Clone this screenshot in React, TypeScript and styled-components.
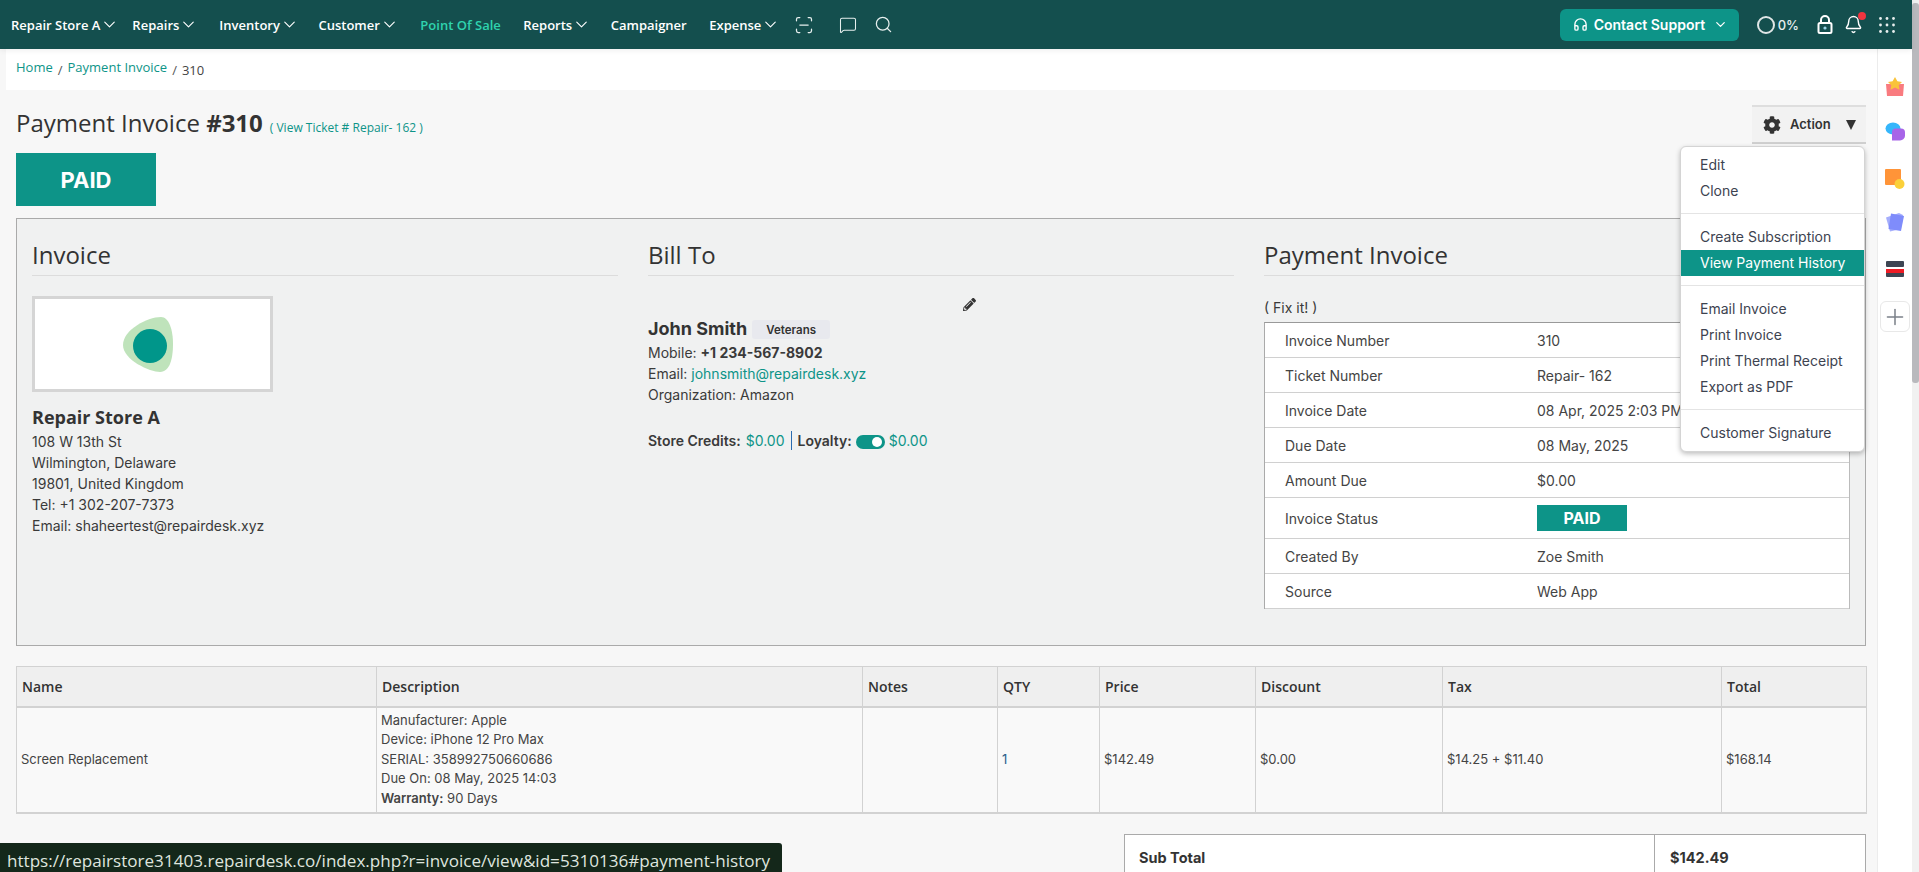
import React from "react";
import styled, { createGlobalStyle } from "styled-components";
import {
  ChevronDown,
  ScanLine,
  MessageSquare,
  Search,
  Bell,
  Headphones,
  Plus,
} from "lucide-react";
import { FaCog, FaPencilAlt } from "react-icons/fa";

const teal = "#0d9488";
const text = "#3a3a3a";
const heading = `"Open Sans", "Noto Sans", sans-serif`;
const body = `Inter, "Liberation Sans", sans-serif`;

const GlobalStyle = createGlobalStyle`
  html, body {
    margin: 0;
    padding: 0;
    height: 100%;
    overflow: hidden;
    background: #f7f7f7;
    font-family: ${body};
    color: ${text};
  }
  *, *::before, *::after { box-sizing: border-box; }
`;

const Shell = styled.div`
  position: relative;
  display: grid;
  grid-template-columns: 1fr 7px;
  width: 1919px;
  height: 872px;
  overflow: hidden;
`;

const Scrollbar = styled.div`
  background: #f1f1f1;
  padding-top: 3px;
  &::before {
    content: "";
    display: block;
    height: 380px;
    background: #b9b9bd;
    border-radius: 3px;
  }
`;

const Window = styled.div`
  display: flex;
  flex-direction: column;
  min-width: 0;
  height: 872px;
`;

const TopBar = styled.header`
  flex: 0 0 49px;
  display: flex;
  align-items: center;
  padding-left: 1.5px;
  background: #144f4e;
  color: #fff;
  position: relative;
  z-index: 2;
  box-shadow: 0 1px 6px rgba(0, 0, 0, 0.08);
`;

const NavItem = styled.a<{ $active?: boolean; $right?: number }>`
  display: flex;
  align-items: center;
  padding: 0 ${(p) => p.$right ?? 9.5}px 0 9.5px;
  font-family: ${heading};
  font-size: 13px;
  font-weight: 600;
  white-space: nowrap;
  color: ${(p) => (p.$active ? "#2fd3ae" : "#fff")};
`;

const NavIcon = styled.span<{ $gap: number }>`
  display: flex;
  margin-left: ${(p) => p.$gap}px;
  color: #e6efee;
`;

const RightTools = styled.div`
  margin-left: auto;
  display: flex;
  align-items: center;
  padding-right: 17px;
`;

const SupportButton = styled.a`
  display: flex;
  align-items: center;
  width: 179px;
  height: 32px;
  margin-right: 18px;
  padding-left: 13px;
  gap: 6px;
  background: ${teal};
  border-radius: 6px;
  font-size: 14px;
  font-weight: 600;
  color: #fff;
`;

const SupportChevron = styled(ChevronDown)`
  margin-left: 2px;
`;

const Progress = styled.span`
  display: flex;
  align-items: center;
  gap: 3px;
  margin-right: 18px;
  font-size: 13px;
  font-weight: 500;
  color: #e8eeee;
  &::before {
    content: "";
    width: 18px;
    height: 18px;
    border: 2px solid #dfe6e6;
    border-radius: 50%;
  }
`;

const BellWrap = styled.span`
  position: relative;
  display: flex;
  margin: 0 16px 0 11px;
`;

const BellDot = styled.span`
  position: absolute;
  top: -3px;
  right: -3px;
  width: 8px;
  height: 8px;
  border-radius: 50%;
  background: #f0353f;
`;

const Content = styled.div`
  flex: 1;
  display: flex;
  min-height: 0;
`;

const Main = styled.main`
  flex: 1;
  min-width: 0;
  overflow: hidden;
  background: #f7f7f7;
`;

const Crumbs = styled.nav`
  height: 41px;
  margin-left: 6px;
  padding: 10px 0 0 10px;
  display: flex;
  align-items: flex-start;
  gap: 5px;
  background: #fff;
  font-family: ${heading};
  font-size: 13px;
  line-height: 16px;
`;

const CrumbLink = styled.a`
  color: ${teal};
`;

const CrumbSep = styled.span`
  margin-top: 3px;
  color: #555;
`;

const CrumbCurrent = styled.span`
  margin-top: 3px;
  color: #444;
`;

const Page = styled.div`
  padding: 15px 11px 0 16px;
`;

const TitleRow = styled.div`
  display: flex;
  justify-content: space-between;
  height: 39px;
`;

const Title = styled.h1`
  margin: 0;
  padding-top: 1px;
  font-family: ${heading};
  font-size: 24px;
  font-weight: 400;
  line-height: 33px;
  color: #333;
  b {
    font-weight: 700;
  }
`;

const TicketLink = styled.a`
  margin-left: 7px;
  font-size: 12px;
  color: ${teal};
`;

const ActionWrap = styled.div`
  position: relative;
  width: 114px;
`;

const ActionButton = styled.button`
  width: 100%;
  height: 39px;
  display: flex;
  align-items: center;
  padding: 0 10px 0 11px;
  background: #f2f2f2;
  border: 0;
  border-top: 2px solid #dedede;
  border-bottom: 2px solid #cfcfcf;
  font-family: ${body};
  font-size: 13px;
  font-weight: 600;
  color: #333;
  span {
    margin-left: 9px;
    margin-top: -1px;
  }
  i {
    margin-left: auto;
    width: 0;
    height: 0;
    border-left: 5px solid transparent;
    border-right: 5px solid transparent;
    border-top: 10px solid #333;
  }
`;

const Menu = styled.div`
  position: absolute;
  z-index: 3;
  top: 41px;
  right: 1px;
  width: 185px;
  padding: 5px 0;
  background: #fff;
  border: 1px solid #d4d4d4;
  border-radius: 6px;
  box-shadow: 0 2px 5px rgba(0, 0, 0, 0.25);
`;

const MenuItem = styled.a<{ $active?: boolean }>`
  display: block;
  height: 26px;
  padding-left: 19px;
  font-size: 14px;
  line-height: 26px;
  background: ${(p) => (p.$active ? teal : "transparent")};
  color: ${(p) => (p.$active ? "#fff" : "#3d4350")};
`;

const MenuDivider = styled.hr`
  height: 1px;
  margin: 9px 0 10px;
  border: 0;
  background: #e4e4e4;
`;

const PaidBanner = styled.div`
  width: 140px;
  height: 53px;
  margin-top: 9px;
  display: flex;
  align-items: center;
  justify-content: center;
  background: ${teal};
  color: #fff;
  font-size: 22px;
  font-weight: 700;
`;

const InfoPanel = styled.section`
  height: 428px;
  margin-top: 12px;
  padding: 14px 15px;
  display: grid;
  grid-template-columns: repeat(3, 586px);
  column-gap: 30px;
  background: #f0f1f1;
  border: 1px solid #aaa;
`;

const Column = styled.div`
  min-width: 0;
`;

const ColumnTitle = styled.h2`
  margin: 0;
  height: 43px;
  font-family: ${heading};
  font-size: 24px;
  font-weight: 400;
  line-height: 44px;
  color: #333;
  border-bottom: 1px solid #dcdcdc;
`;

const LogoBox = styled.div`
  width: 241px;
  height: 96px;
  margin-top: 20px;
  display: flex;
  align-items: center;
  justify-content: center;
  background: #fff;
  border: 3px solid #d5d5d5;
  svg {
    margin-left: -9px;
  }
`;

const StoreName = styled.div`
  margin-top: 14px;
  font-family: ${heading};
  font-size: 18px;
  font-weight: 700;
  line-height: 23px;
  color: #333;
`;

const Lines = styled.div`
  margin-top: 2px;
  font-size: 14px;
  line-height: 21px;
  color: ${text};
`;

const EditRow = styled.div`
  display: flex;
  justify-content: flex-end;
  height: 14px;
  margin-top: 22px;
  padding-right: 258px;
  color: #333;
`;

const CustomerName = styled.div`
  display: flex;
  align-items: center;
  margin-top: 4px;
  height: 24px;
  font-size: 18px;
  font-weight: 700;
  color: #333;
`;

const Pill = styled.span`
  width: 78px;
  height: 19px;
  margin: 3px 0 0 5px;
  display: flex;
  align-items: center;
  justify-content: center;
  background: #e8e9ee;
  border-radius: 3px;
  font-size: 11.5px;
  font-weight: 600;
`;

const CreditsRow = styled.div`
  display: flex;
  align-items: center;
  margin-top: 25px;
  font-size: 14px;
  line-height: 21px;
  b {
    font-weight: 600;
  }
`;

const TealText = styled.span`
  color: ${teal};
`;

const CreditAmount = styled(TealText)`
  margin-left: 5px;
`;

const CreditSep = styled.span`
  width: 1px;
  height: 19px;
  margin: 0 6px;
  background: #2b6cb0;
`;

const Toggle = styled.span`
  position: relative;
  width: 29px;
  height: 14px;
  margin: 2px 4px 0 4px;
  border-radius: 8px;
  background: ${teal};
  &::after {
    content: "";
    position: absolute;
    top: 2px;
    right: 3px;
    width: 10px;
    height: 10px;
    border-radius: 50%;
    background: #fff;
  }
`;

const FixIt = styled.div`
  margin-top: 22px;
  height: 24px;
  font-size: 14px;
  line-height: 20px;
`;

const DetailTable = styled.div`
  background: #fff;
  border-top: 1px solid #999;
  border-left: 1px solid #aaa;
  border-right: 1px solid #bbb;
`;

const DetailRow = styled.div<{ $tall?: boolean }>`
  display: grid;
  grid-template-columns: 252px 1fr;
  align-items: center;
  height: ${(p) => (p.$tall ? 41 : 35)}px;
  padding-left: 20px;
  font-size: 14px;
  color: #444;
  border-bottom: 1px solid #d0d0d0;
`;

const StatusBadge = styled.span`
  width: 90px;
  height: 26px;
  display: flex;
  align-items: center;
  justify-content: center;
  background: ${teal};
  color: #fff;
  font-size: 16px;
  font-weight: 700;
`;

const ItemsTable = styled.table`
  width: 100%;
  margin-top: 20px;
  table-layout: fixed;
  border-collapse: collapse;
`;

const Col = styled.col<{ $w: number }>`
  width: ${(p) => p.$w}px;
`;

const Th = styled.th`
  height: 40px;
  padding: 0 5px;
  text-align: left;
  background: #efefef;
  border: 1px solid #d2d2d2;
  border-bottom-width: 2px;
  font-family: ${heading};
  font-size: 14px;
  font-weight: 600;
  color: #333;
`;

const Td = styled.td<{ $link?: boolean }>`
  padding: 0 4px;
  height: 106px;
  background: #f9f9f9;
  border: 1px solid #d2d2d2;
  border-top: 0;
  border-bottom-width: 2px;
  font-size: 13px;
  line-height: 19.5px;
  color: ${(p) => (p.$link ? "#2b5f8a" : "#444")};
  b {
    font-weight: 600;
  }
`;

const TotalsTable = styled.div`
  display: grid;
  grid-template-columns: 529px 1fr;
  width: 742px;
  margin: 20px 0 0 auto;
  background: #fff;
  border: 1px solid #aaa;
  border-bottom: 0;
`;

const TotalCell = styled.div<{ $value?: boolean }>`
  height: 48px;
  padding: 15px 0 0 ${(p) => (p.$value ? 15 : 14)}px;
  font-size: 14.5px;
  font-weight: 700;
  line-height: 16px;
  color: #333;
  border-left: ${(p) => (p.$value ? "1px solid #aaa" : "0")};
`;

const Dock = styled.aside`
  flex: 0 0 35px;
  padding-top: 28px;
  display: flex;
  flex-direction: column;
  align-items: center;
  background: #fff;
  border-left: 1px solid #ececec;
`;

const DockIcon = styled.svg<{ $mt: number }>`
  display: block;
  margin-top: ${(p) => p.$mt}px;
`;

const DockAdd = styled.div`
  width: 30px;
  height: 31px;
  margin-top: 24px;
  display: flex;
  align-items: center;
  justify-content: center;
  background: #fff;
  border: 1px solid #e8e8e8;
  border-radius: 6px;
  color: #7b8089;
`;

const StatusBar = styled.div`
  position: absolute;
  left: 0;
  bottom: 0;
  width: 782px;
  height: 29px;
  padding: 6px 0 0 7px;
  background: #14271a;
  border-top-right-radius: 3px;
  font-family: ${heading};
  font-size: 17.08px;
  line-height: 23px;
  white-space: nowrap;
  color: #dfe5df;
`;

const navItems = [
  { label: "Repair Store A", chevron: true, right: 3.5 },
  { label: "Repairs", chevron: true, right: 11.5 },
  { label: "Inventory", chevron: true, right: 10 },
  { label: "Customer", chevron: true, right: 12 },
  { label: "Point Of Sale", chevron: false, active: true, right: 13 },
  { label: "Reports", chevron: true, right: 10 },
  { label: "Campaigner", chevron: false, right: 13 },
  { label: "Expense", chevron: true, right: 10 },
];

const details = [
  ["Invoice Number", "310"],
  ["Ticket Number", "Repair- 162"],
  ["Invoice Date", "08 Apr, 2025 2:03 PM"],
  ["Due Date", "08 May, 2025"],
  ["Amount Due", "$0.00"],
];

const columns = [360, 486, 135, 102, 156, 187, 279, 145];
const headers = ["Name", "Description", "Notes", "QTY", "Price", "Discount", "Tax", "Total"];

const PadLock = () => (
  <svg width="16" height="19" viewBox="0 0 16 19" fill="none">
    <path d="M4 8V5a4 4 0 0 1 8 0v3" stroke="#fff" strokeWidth="2" />
    <rect x="1.5" y="8" width="13" height="10" rx="1.5" stroke="#fff" strokeWidth="2" fill="#144f4e" />
    <circle cx="8" cy="13" r="1.6" fill="#9ad5e8" />
  </svg>
);

const Grid = () => (
  <svg width="16" height="16" viewBox="0 0 16 16" fill="#e8eeee">
    {[1.5, 8, 14.5].map((y) =>
      [1.5, 8, 14.5].map((x) => <circle key={`${x}-${y}`} cx={x} cy={y} r="1.4" />)
    )}
  </svg>
);

export default function App() {
  return (
    <Shell>
      <GlobalStyle />
      <Window>
        <TopBar>
          {navItems.map((item) => (
            <NavItem key={item.label} $active={item.active} $right={item.right}>
              {item.label}
              {item.chevron && <ChevronDown size={19} strokeWidth={1.4} />}
            </NavItem>
          ))}
          <NavIcon $gap={4}>
            <ScanLine size={20} strokeWidth={1.5} />
          </NavIcon>
          <NavIcon $gap={25}>
            <MessageSquare size={18} strokeWidth={1.4} />
          </NavIcon>
          <NavIcon $gap={17}>
            <Search size={19} strokeWidth={1.6} />
          </NavIcon>
          <RightTools>
            <SupportButton>
              <Headphones size={15} strokeWidth={2.2} />
              Contact Support
              <SupportChevron size={15} strokeWidth={2} />
            </SupportButton>
            <Progress>0%</Progress>
            <PadLock />
            <BellWrap>
              <Bell size={19} strokeWidth={1.8} />
              <BellDot />
            </BellWrap>
            <Grid />
          </RightTools>
        </TopBar>
        <Content>
          <Main>
            <Crumbs>
              <CrumbLink>Home</CrumbLink>
              <CrumbSep>/</CrumbSep>
              <CrumbLink>Payment Invoice</CrumbLink>
              <CrumbSep>/</CrumbSep>
              <CrumbCurrent>310</CrumbCurrent>
            </Crumbs>
            <Page>
              <TitleRow>
                <Title>
                  Payment Invoice <b>#310</b>
                  <TicketLink>( View Ticket # Repair- 162 )</TicketLink>
                </Title>
                <ActionWrap>
                  <ActionButton>
                    <FaCog size={18} />
                    <span>Action</span>
                    <i />
                  </ActionButton>
                  <Menu>
                    <MenuItem>Edit</MenuItem>
                    <MenuItem>Clone</MenuItem>
                    <MenuDivider />
                    <MenuItem>Create Subscription</MenuItem>
                    <MenuItem $active>View Payment History</MenuItem>
                    <MenuDivider />
                    <MenuItem>Email Invoice</MenuItem>
                    <MenuItem>Print Invoice</MenuItem>
                    <MenuItem>Print Thermal Receipt</MenuItem>
                    <MenuItem>Export as PDF</MenuItem>
                    <MenuDivider />
                    <MenuItem>Customer Signature</MenuItem>
                  </Menu>
                </ActionWrap>
              </TitleRow>
              <PaidBanner>PAID</PaidBanner>
              <InfoPanel>
                <Column>
                  <ColumnTitle>Invoice</ColumnTitle>
                  <LogoBox>
                    <svg width="52" height="57" viewBox="0 0 52 57">
                      <path
                        d="M39 1C47 1 51 14 51 28C51 42 48 56 38 56C28 56 1 44 1 29C1 14 25 1 39 1Z"
                        fill="#bfe3bb"
                      />
                      <ellipse cx="28" cy="30" rx="17" ry="17" fill="#00968a" />
                    </svg>
                  </LogoBox>
                  <StoreName>Repair Store A</StoreName>
                  <Lines>
                    108 W 13th St
                    <br />
                    Wilmington, Delaware
                    <br />
                    19801, United Kingdom
                    <br />
                    Tel: +1 302-207-7373
                    <br />
                    Email: shaheertest@repairdesk.xyz
                  </Lines>
                </Column>
                <Column>
                  <ColumnTitle>Bill To</ColumnTitle>
                  <EditRow>
                    <FaPencilAlt size={13} />
                  </EditRow>
                  <CustomerName>
                    John Smith
                    <Pill>Veterans</Pill>
                  </CustomerName>
                  <Lines>
                    Mobile: <strong>+1 234-567-8902</strong>
                    <br />
                    Email: <TealText>johnsmith@repairdesk.xyz</TealText>
                    <br />
                    Organization: Amazon
                  </Lines>
                  <CreditsRow>
                    <b>Store Credits:</b>
                    <CreditAmount>$0.00</CreditAmount>
                    <CreditSep />
                    <b>Loyalty:</b>
                    <Toggle />
                    <TealText>$0.00</TealText>
                  </CreditsRow>
                </Column>
                <Column>
                  <ColumnTitle>Payment Invoice</ColumnTitle>
                  <FixIt>( Fix it! )</FixIt>
                  <DetailTable>
                    {details.map(([label, value]) => (
                      <DetailRow key={label}>
                        <span>{label}</span>
                        <span>{value}</span>
                      </DetailRow>
                    ))}
                    <DetailRow $tall>
                      <span>Invoice Status</span>
                      <StatusBadge>PAID</StatusBadge>
                    </DetailRow>
                    <DetailRow>
                      <span>Created By</span>
                      <span>Zoe Smith</span>
                    </DetailRow>
                    <DetailRow>
                      <span>Source</span>
                      <span>Web App</span>
                    </DetailRow>
                  </DetailTable>
                </Column>
              </InfoPanel>
              <ItemsTable>
                <colgroup>
                  {columns.map((w, i) => (
                    <Col key={i} $w={w} />
                  ))}
                </colgroup>
                <thead>
                  <tr>
                    {headers.map((h) => (
                      <Th key={h}>{h}</Th>
                    ))}
                  </tr>
                </thead>
                <tbody>
                  <tr>
                    <Td>Screen Replacement</Td>
                    <Td>
                      Manufacturer: Apple
                      <br />
                      Device: iPhone 12 Pro Max
                      <br />
                      SERIAL: 358992750660686
                      <br />
                      Due On: 08 May, 2025 14:03
                      <br />
                      <b>Warranty:</b> 90 Days
                    </Td>
                    <Td />
                    <Td $link>1</Td>
                    <Td>$142.49</Td>
                    <Td>$0.00</Td>
                    <Td>$14.25 + $11.40</Td>
                    <Td>$168.14</Td>
                  </tr>
                </tbody>
              </ItemsTable>
              <TotalsTable>
                <TotalCell>Sub Total</TotalCell>
                <TotalCell $value>$142.49</TotalCell>
              </TotalsTable>
            </Page>
          </Main>
          <Dock>
            <DockIcon $mt={0} width="20" height="19" viewBox="0 0 20 19">
              <path d="M1 7h18l-1 12H2z" fill="#f97b7f" />
              <path d="M10 0l2.4 4.2 4.6.8-3.3 3.2.8 4.6L10 10.6 5.500 12.8l.8-4.6L3 5l4.600-.8z" fill="#f9c33a" />
            </DockIcon>
            <DockIcon $mt={26} width="20" height="21" viewBox="0 0 20 21">
              <ellipse cx="8" cy="6.500" rx="7.500" ry="6" fill="#35b6fb" />
              <path d="M7 10c0-2 1.500-3.500 3.500-3.500H16a4 4 0 0 1 4 4v3a5 5 0 0 1-5 5H7z" fill="#a764e8" />
            </DockIcon>
            <DockIcon $mt={26} width="20" height="21" viewBox="0 0 20 21">
              <rect x="0" y="0" width="16" height="16" rx="1" fill="#ff9438" />
              <circle cx="14.500" cy="15" r="5" fill="#fbd03a" />
            </DockIcon>
            <DockIcon $mt={22} width="20" height="20" viewBox="0 0 20 20">
              <path d="M1 5.500L14 1l4 2-2.500 14L5 19.500z" fill="#a5aefc" />
              <path d="M6 1.500L19 4l-3 15-12.500-2z" fill="#7f8cfb" />
            </DockIcon>
            <DockIcon $mt={29} width="18" height="16" viewBox="0 0 18 16">
              <rect width="18" height="6" rx="1" fill="#3e4553" />
              <rect y="10" width="18" height="6" rx="1" fill="#3e4553" />
              <rect y="8" width="18" height="4" fill="#ee1c25" />
            </DockIcon>
            <DockAdd>
              <Plus size={26} strokeWidth={1.4} />
            </DockAdd>
          </Dock>
        </Content>
      </Window>
      <Scrollbar />
      <StatusBar>https://repairstore31403.repairdesk.co/index.php?r=invoice/view&amp;id=5310136#payment-history</StatusBar>
    </Shell>
  );
}
